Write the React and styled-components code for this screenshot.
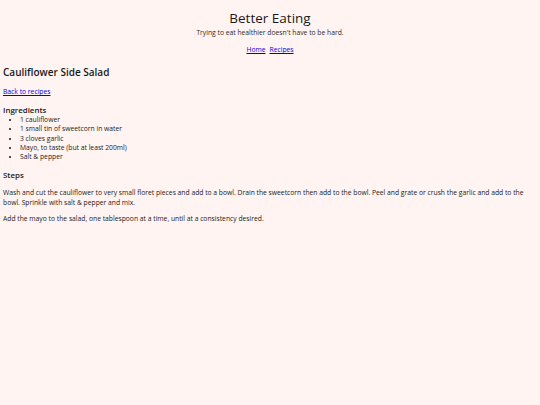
import React from "react";
import styled, { createGlobalStyle } from "styled-components";

const GlobalStyle = createGlobalStyle`
  html, body {
    margin: 0;
    background: #fff4f2;
  }
  body {
    padding: 0 3px;
    font-family: "Open Sans", "Liberation Sans", sans-serif;
    font-size: 6.75px;
    line-height: 9.25px;
    color: #1a1a1a;
  }
  a {
    color: #0000ee;
  }
`;

const Header = styled.header`
  text-align: center;
  padding-top: 9px;
`;

const Title = styled.h1`
  margin: 0;
  font-size: 13.5px;
  font-weight: 400;
  line-height: 18px;
`;

const Tagline = styled.p`
  margin: 1px 0 0;
  color: #2a2a2a;
`;

const Nav = styled.nav`
  display: flex;
  justify-content: center;
  gap: 4px;
  margin-top: 8px;
`;

const Heading = styled.h2`
  margin: 11.5px 0 0;
  font-size: 10px;
  font-weight: 600;
  line-height: 13.6px;
`;

const SubHeading = styled.h3`
  margin: ${(p) => p.$top}px 0 0;
  font-size: 7.9px;
  font-weight: 600;
  line-height: 10.8px;
`;

const Para = styled.p`
  margin: ${(p) => p.$top}px 0 0;
  line-height: ${(p) => p.$lh || 9.25}px;
`;

const List = styled.ul`
  margin: -1px 0 0;
  padding-left: 17px;
`;

const ingredients = [
  "1 cauliflower",
  "1 small tin of sweetcorn in water",
  "3 cloves garlic",
  "Mayo, to taste (but at least 200ml)",
  "Salt & pepper",
];

export default function App() {
  return (
    <>
      <GlobalStyle />
      <Header>
        <Title>Better Eating</Title>
        <Tagline>Trying to eat healthier doesn't have to be hard.</Tagline>
        <Nav>
          <a href="#">Home</a>
          <a href="#">Recipes</a>
        </Nav>
      </Header>
      <main>
        <Heading>Cauliflower Side Salad</Heading>
        <Para $top={7.6}>
          <a href="#">Back to recipes</a>
        </Para>
        <SubHeading $top={9}>Ingredients</SubHeading>
        <List>
          {ingredients.map((item) => (
            <li key={item}>{item}</li>
          ))}
        </List>
        <SubHeading $top={9}>Steps</SubHeading>
        <Para $top={7} $lh={9.8}>
          Wash and cut the cauliflower to very small floret pieces and add to a
          bowl. Drain the sweetcorn then add to the bowl. Peel and grate or
          crush the garlic and add to the bowl. Sprinkle with salt &amp; pepper
          and mix.
        </Para>
        <Para $top={6.2} $lh={9.8}>
          Add the mayo to the salad, one tablespoon at a time, until at a
          consistency desired.
        </Para>
      </main>
    </>
  );
}
